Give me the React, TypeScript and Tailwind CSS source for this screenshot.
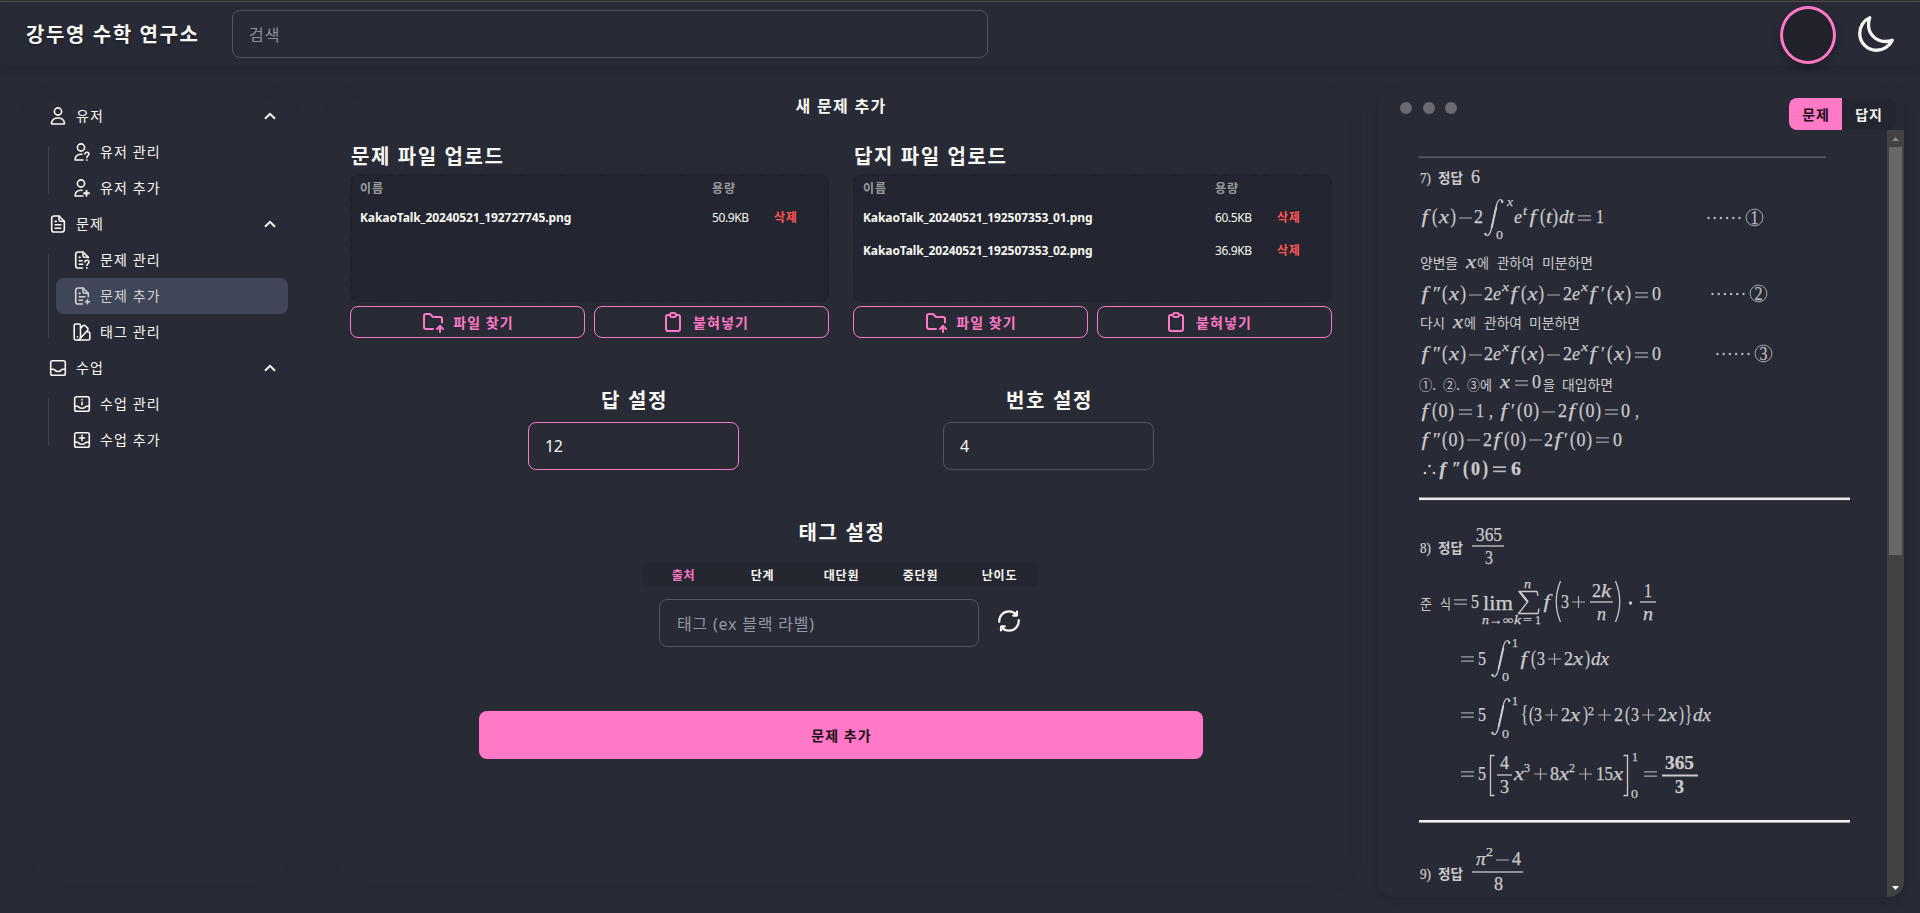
import type { ReactNode } from "react";
import { IoMoonOutline } from "react-icons/io5";
import { TbClipboard, TbFolderUp } from "react-icons/tb";

/* ---------- icons ---------- */

function Icon({ children }: { children: ReactNode }) {
  return (
    <svg
      viewBox="0 0 20 20"
      className="h-5 w-5 shrink-0"
      fill="none"
      stroke="currentColor"
      strokeWidth="1.6"
      strokeLinecap="round"
      strokeLinejoin="round"
    >
      {children}
    </svg>
  );
}

const Question = (
  <path d="M12.9 11.9c.2-1.1 1-1.6 2-1.6 1.200 0 2 .8 2 1.800 0 1.700-2 1.600-2 3.300M14.900 17.900v.3" strokeWidth="1.600" />
);
const personShape = "M11 18H3.100c-.3-3.500 2-5.700 5.900-5.700h1";

const UserIcon = () => (
  <Icon>
    <circle cx="10" cy="5.500" r="3.600" />
    <path d="M4.400 18c-.7 0-1-.4-.9-1 .5-3 2.700-5 6.500-5s6 2 6.500 5c.1.6-.2 1-.9 1z" />
  </Icon>
);
const UserQuestionIcon = () => (
  <Icon>
    <circle cx="9" cy="5.500" r="3.600" />
    <path d={personShape} />
    {Question}
  </Icon>
);
const UserPlusIcon = () => (
  <Icon>
    <circle cx="9" cy="5.500" r="3.600" />
    <path d={personShape} />
    <path d="M14.500 12.700v5M12 15.200h5" strokeWidth="1.900" />
  </Icon>
);
const sheetCorner = "M11 2v3.500a1.700 1.700 0 0 0 1.700 1.700h3.600";
const FileIcon = () => (
  <Icon>
    <path d="M11 2H6a2.300 2.300 0 0 0-2.300 2.300v11.400A2.300 2.300 0 0 0 6 18h8a2.300 2.300 0 0 0 2.300-2.300V7.200z" />
    <path d={sheetCorner} />
    <path d="M7.200 7.400h1M7.200 10.800h5.600M7.200 14.200h5.600" />
  </Icon>
);
const FileQuestionIcon = () => (
  <Icon>
    <path d="M10.500 18H6a2.300 2.300 0 0 1-2.300-2.300V4.300A2.300 2.300 0 0 1 6 2h5l5.300 5.200v.6" />
    <path d={sheetCorner} />
    <path d="M7.200 7.400h.8M7.200 10.800h3M7.200 14.200h3.500" />
    {Question}
  </Icon>
);
const FilePlusIcon = () => (
  <Icon>
    <path d="M10.500 18H6a2.300 2.300 0 0 1-2.300-2.300V4.300A2.300 2.300 0 0 1 6 2h5l5.300 5.200v3.500" />
    <path d={sheetCorner} />
    <path d="M7.200 7.400h.8M7.200 10.800h5.600M7.200 14.200h3.200M15.500 13.800v4M13.500 15.800h4" />
  </Icon>
);
const SwatchIcon = () => (
  <Icon>
    <rect x="2.200" y="2" width="6.300" height="16" rx="1.600" />
    <path d="M8.500 6.200l2.700-2.500c.7-.6 1.500-.6 2.100 0l2.300 2.400c.6.7.6 1.500 0 2.100L7 17.700M14.300 9.800h1.800a1.700 1.700 0 0 1 1.700 1.700v4.800a1.700 1.700 0 0 1-1.700 1.700H6M5.400 14.800v.2" />
  </Icon>
);
const InboxIcon = () => (
  <Icon>
    <rect x="2.700" y="2.700" width="14.600" height="14.600" rx="1.800" />
    <path d="M2.900 11.200h2.600c1 0 1.500 2.300 4.500 2.300s3.500-2.300 4.500-2.300h2.600" />
  </Icon>
);
const InboxInfoIcon = () => (
  <Icon>
    <rect x="2.700" y="2.700" width="14.600" height="14.600" rx="1.800" />
    <path d="M2.900 12.200h2.600c1 0 1.500 2 4.500 2s3.500-2 4.500-2h2.600M10 5.600v.3M10 8.200v2.600" />
  </Icon>
);
const InboxPlusIcon = () => (
  <Icon>
    <rect x="2.700" y="2.700" width="14.600" height="14.600" rx="1.800" />
    <path d="M2.900 12.200h2.600c1 0 1.500 2 4.500 2s3.500-2 4.500-2h2.600M10 5.400v5.200M7.400 8h5.200" />
  </Icon>
);

const RefreshIcon = () => (
  <svg viewBox="0 0 24 24" className="mb-[5px] h-6 w-6" fill="none" stroke="currentColor" strokeWidth="2.200" strokeLinecap="round" strokeLinejoin="round">
    <path d="M2.300 12.800C2 6.500 6.500 2.300 12 2.300c3 0 5.500 1.200 7.300 3.200M20 2.600v3.400c0 .4-.2.600-.6.600h-3.200" />
    <path d="M21.700 11.200c.3 6.300-4.200 10.500-9.700 10.500-3 0-5.500-1.200-7.300-3.200M4 21.400v-3.400c0-.4.2-.6.6-.6h3.200" />
  </svg>
);

/* ---------- sidebar ---------- */

type Item = { label: string; icon: ReactNode; active?: boolean };
const groups: { label: string; icon: ReactNode; items: Item[] }[] = [
  {
    label: "유저",
    icon: <UserIcon />,
    items: [
      { label: "유저 관리", icon: <UserQuestionIcon /> },
      { label: "유저 추가", icon: <UserPlusIcon /> },
    ],
  },
  {
    label: "문제",
    icon: <FileIcon />,
    items: [
      { label: "문제 관리", icon: <FileQuestionIcon /> },
      { label: "문제 추가", icon: <FilePlusIcon />, active: true },
      { label: "태그 관리", icon: <SwatchIcon /> },
    ],
  },
  {
    label: "수업",
    icon: <InboxIcon />,
    items: [
      { label: "수업 관리", icon: <InboxInfoIcon /> },
      { label: "수업 추가", icon: <InboxPlusIcon /> },
    ],
  },
];

function Sidebar() {
  return (
    <aside className="h-[815px] w-[288px] shrink-0 rounded-[44px] p-4 text-[14px] tracking-[1.1px] shadow-[inset_0_0_20px_rgba(0,0,0,0.055)]">
      {groups.map((g) => (
        <div key={g.label}>
          <div className="flex h-9 items-center gap-2 pr-3 pl-4">
            {g.icon}
            <span className="mb-px grow">{g.label}</span>
            <svg viewBox="0 0 12 8" className="h-2 w-3" fill="none" stroke="currentColor" strokeWidth="2">
              <path d="M1 6.800l5-5 5 5" />
            </svg>
          </div>
          <div className="ml-4 flex">
            <div className="my-3 w-px bg-[#3d3f4a]" />
            <ul className="grow pl-[7px]">
              {g.items.map((i) => (
                <li
                  key={i.label}
                  className={
                    i.active
                      ? "flex h-9 items-center gap-2 rounded-lg bg-[#414558] px-4 text-[#d3d3d3]"
                      : "flex h-9 items-center gap-2 px-4"
                  }
                >
                  {i.icon}
                  <span className="mb-px">{i.label}</span>
                </li>
              ))}
            </ul>
          </div>
        </div>
      ))}
    </aside>
  );
}

/* ---------- main form ---------- */

type UploadFile = { name: string; size: string };

function OutlineButton({ icon, label, inset }: { icon: ReactNode; label: string; inset?: boolean }) {
  return (
    <button
      className={
        inset
          ? "flex h-8 w-[235px] items-center justify-center gap-2 rounded-lg border border-[#ff79c6] pr-[13px] text-[14px] font-bold tracking-[1.1px] text-[#ff79c6]"
          : "flex h-8 w-[235px] items-center justify-center gap-2 rounded-lg border border-[#ff79c6] text-[14px] font-bold tracking-[1.1px] text-[#ff79c6]"
      }
    >
      {icon}
      <span>{label}</span>
    </button>
  );
}

function Upload({ title, files }: { title: string; files: UploadFile[] }) {
  return (
    <section className="w-[479px]">
      <h2 className="h-[37px] pt-[6px] pl-px text-[20px] leading-7 font-bold tracking-[1.6px]">{title}</h2>
      <div className="h-32 rounded-lg border-2 border-dashed border-[#20222c] bg-[#232530] px-2 text-[12px]">
        <div className="flex h-[25px] items-center pt-px font-bold tracking-[1px] text-[#9a9b9c]">
          <span className="w-[352px]">이름</span>
          <span>용량</span>
        </div>
        {files.map((f) => (
          <div key={f.name} className="flex h-[33px] items-center">
            <span className="w-[352px] font-bold tracking-[-0.1px]">{f.name}</span>
            <span className="w-[62px] tracking-[-0.4px]">{f.size}</span>
            <span className="font-bold tracking-[0.8px] text-[#ff5555]">삭제</span>
          </div>
        ))}
      </div>
      <div className="mt-1 flex justify-between">
        <OutlineButton icon={<TbFolderUp className="h-6 w-6" />} label="파일 찾기" />
        <OutlineButton icon={<TbClipboard className="h-6 w-6" />} label="붙혀넣기" inset />
      </div>
    </section>
  );
}

function Field({ title, value, focused }: { title: string; value: string; focused?: boolean }) {
  return (
    <section className="flex w-[211px] flex-col items-center">
      <h2 className="mb-[7px] pt-px pl-[2px] text-[20px] leading-7 font-bold tracking-[1.6px]">{title}</h2>
      <input
        defaultValue={value}
        className={
          focused
            ? "h-12 w-full rounded-lg border border-[#ff79c6] bg-transparent px-4 pb-px text-[16px] tracking-[-0.3px] outline-none"
            : "h-12 w-full rounded-lg border border-[#52545e] bg-transparent px-4 pb-px text-[16px] tracking-[-0.3px] outline-none"
        }
      />
    </section>
  );
}

const tabs = ["출처", "단계", "대단원", "중단원", "난이도"];

function ProblemForm() {
  return (
    <main className="ml-4 flex h-[815px] w-[1042px] shrink-0 flex-col items-center rounded-[44px] px-[30px] pt-3 shadow-[inset_0_0_20px_rgba(0,0,0,0.055)]">
      <h1 className="text-[16px] leading-6 font-bold tracking-[1.3px]">새 문제 추가</h1>
      <div className="mt-[19px] flex w-full justify-between">
        <Upload title="문제 파일 업로드" files={[{ name: "KakaoTalk_20240521_192727745.png", size: "50.9KB" }]} />
        <Upload
          title="답지 파일 업로드"
          files={[
            { name: "KakaoTalk_20240521_192507353_01.png", size: "60.5KB" },
            { name: "KakaoTalk_20240521_192507353_02.png", size: "36.9KB" },
          ]}
        />
      </div>
      <div className="mt-12 flex w-full gap-[204px] pl-[178px]">
        <Field title="답 설정" value="12" focused />
        <Field title="번호 설정" value="4" />
      </div>
      <h2 className="mt-[49px] pl-[2px] text-[20px] leading-7 font-bold tracking-[1.6px]">태그 설정</h2>
      <div className="mt-4 grid h-6 w-[396px] grid-cols-5 items-center rounded-lg bg-[#242630] pt-px pl-px text-center text-[12px] font-bold tracking-[0.8px]">
        {tabs.map((t, i) => (
          <span key={t} className={i === 0 ? "text-[#ff79c6]" : ""}>
            {t}
          </span>
        ))}
      </div>
      <div className="mt-3 flex w-[364px] items-center gap-[18px]">
        <input
          placeholder="태그 (ex 블랙 라벨)"
          className="h-12 w-80 shrink-0 rounded-lg border border-[#52545e] bg-transparent pt-[2px] pr-4 pl-[17px] text-[16px] tracking-[0.8px] outline-none placeholder:text-[#9399a4]"
        />
        <RefreshIcon />
      </div>
      <button className="mt-16 h-12 w-[724px] rounded-lg bg-[#ff79c6] pl-px text-[14px] font-bold tracking-[1.1px] text-[#211019]">
        문제 추가
      </button>
    </main>
  );
}

/* ---------- solution sheet ---------- */

type GlyphRun = {
  x: number;
  y: number;
  w: number;
  s?: number;
  it?: boolean;
  bold?: boolean;
  ko?: boolean;
  t: string;
};

/** One run of the sheet, stretched to its typeset width. */
function R({ x, y, w, s = 18, it, bold, ko, t }: GlyphRun) {
  return (
    <text
      x={x}
      y={y}
      fontSize={s}
      textLength={w}
      lengthAdjust="spacingAndGlyphs"
      fontWeight={bold ? 700 : 400}
      fontStyle={it ? "italic" : "normal"}
      stroke="currentColor"
      strokeWidth={ko ? 0 : 0.25}
      className={ko ? "font-['Noto_Sans_CJK_KR',sans-serif]" : "font-['Liberation_Serif',serif]"}
    >
      {t}
    </text>
  );
}

/** Italic function letter; its tail and hook overhang the advance width. */
function F({ x, y, bold }: { x: number; y: number; bold?: boolean }) {
  return <R x={x + 1.500} y={y} w={6.400} s={19} it bold={bold} t="f" />;
}

/** A single symbol between upright parentheses */
function Paren({ x, y, w, t, it, bold }: GlyphRun) {
  const inner = t === "t" ? 6 : it ? 10 : 9;
  return (
    <>
      <R x={x} y={y} w={5.500} s={20} t="(" bold={bold} />
      <R x={x + (w - inner) / 2} y={y} w={inner} s={18} t={t} it={it} bold={bold} />
      <R x={x + w - 5.500} y={y} w={5.500} s={20} t=")" bold={bold} />
    </>
  );
}

function Minus({ x, y, w = 13 }: { x: number; y: number; w?: number }) {
  return <path d={`M${x} ${y}h${w}`} stroke="currentColor" strokeWidth="1.200" opacity="0.7" />;
}
function Equals({ x, y, w = 13 }: { x: number; y: number; w?: number }) {
  return <path d={`M${x} ${y - 2.2}h${w}M${x} ${y + 2.2}h${w}`} stroke="currentColor" strokeWidth="1.200" opacity="0.75" />;
}
function Plus({ x, y }: { x: number; y: number }) {
  return <path d={`M${x} ${y}h13M${x + 6.5} ${y - 6}v12`} stroke="currentColor" strokeWidth="1.200" opacity="0.8" />;
}
function Bar({ x, y, w, h = 1.3 }: { x: number; y: number; w: number; h?: number }) {
  return <rect x={x} y={y - h / 2} width={w} height={h} fill="currentColor" />;
}
function Integral({ x, y }: { x: number; y: number }) {
  return (
    <g transform={`translate(${x} ${y})`} fill="none" stroke="currentColor" strokeLinecap="round">
      <path d="M18.500 2.200C16.500-.5 13.800.5 12.500 6L7.200 30.500C6 36 3.500 38 1.200 35.300" strokeWidth="1.200" />
      <path d="M12.200 8.500L7.700 28.500" strokeWidth="2" />
      <path d="M18.200 2.600v.1M1.500 35v.1" strokeWidth="2.400" />
    </g>
  );
}
function Reference({ x, y, n }: { x: number; y: number; n: string }) {
  return (
    <g opacity="0.9">
      {[0, 1, 2, 3, 4, 5].map((i) => (
        <circle key={i} cx={x + 1.500 + i * 6.200} cy={y + 0.5} r="1.200" fill="currentColor" />
      ))}
      <circle cx={x + 47.500} cy={y} r="8.400" fill="none" stroke="currentColor" strokeWidth="0.900" />
      <R x={x + 43.500} y={y + 6} w={8} s={18} t={n} />
    </g>
  );
}

function SecondDerivative({ y }: { y: number }) {
  return (
    <>
      <F x={1420} y={y} />
      <R x={1433} y={y} w={8} t="″" />
      <Paren x={1442} y={y} w={24} t="x" it />
      <Minus x={1469} y={y - 5} />
      <R x={1484} y={y} w={9} t="2" />
      <R x={1493} y={y} w={8} it t="e" />
      <R x={1502} y={y - 9} w={7} s={13} it t="x" />
      <F x={1509} y={y} />
      <Paren x={1521} y={y} w={23} t="x" it />
      <Minus x={1547} y={y - 5} />
      <R x={1563} y={y} w={9} t="2" />
      <R x={1572} y={y} w={8} it t="e" />
      <R x={1581} y={y - 9} w={7} s={13} it t="x" />
      <F x={1588} y={y} />
      <R x={1601} y={y} w={4} t="′" />
      <Paren x={1607} y={y} w={24} t="x" it />
      <Equals x={1635} y={y - 5} />
      <R x={1652} y={y} w={9} t="0" />
    </>
  );
}

function AnswerLabel({ n, y }: { n: string; y: number }) {
  return (
    <>
      <R x={1420} y={y} w={11} s={14} t={n} />
      <R x={1438} y={y} w={25} s={14} ko bold t="정답" />
    </>
  );
}

function SolutionSheet() {
  return (
    <svg viewBox="1378 130 509 767" className="h-[767px] w-[509px] shrink-0 text-[#cacacd]" fill="currentColor">
      <rect x="1419" y="156.500" width="407" height="1.500" fill="#5e606a" />

      <AnswerLabel n="7)" y={182.5} />
      <R x={1471} y={182.5} w={9} t="6" />

      <F x={1420} y={223} />
      <Paren x={1432} y={223} w={24} t="x" it />
      <Minus x={1459} y={218} />
      <R x={1474} y={223} w={9} t="2" />
      <Integral x={1484} y={199} />
      <R x={1507} y={206} w={6} s={13} it t="x" />
      <R x={1496} y={239} w={7} s={13} t="0" />
      <R x={1514} y={223} w={8} it t="e" />
      <R x={1523} y={215} w={4} s={13} it t="t" />
      <F x={1528} y={223} />
      <Paren x={1540} y={223} w={18} t="t" it />
      <R x={1559} y={223} w={15} it t="dt" />
      <Equals x={1578} y={218} />
      <R x={1596} y={223} w={8} t="1" />
      <Reference x={1707} y={217.500} n="1" />

      <R x={1420} y={268} w={38} s={14} ko t="양변을" />
      <R x={1466} y={268} w={10} it t="x" />
      <R x={1477} y={268} w={12} s={14} ko t="에" />
      <R x={1497} y={268} w={37} s={14} ko t="관하여" />
      <R x={1542} y={268} w={51} s={14} ko t="미분하면" />

      <SecondDerivative y={300} />
      <Reference x={1711} y={293.500} n="2" />

      <R x={1420} y={328} w={25} s={14} ko t="다시" />
      <R x={1453} y={328} w={10} it t="x" />
      <R x={1464} y={328} w={12} s={14} ko t="에" />
      <R x={1484} y={328} w={38} s={14} ko t="관하여" />
      <R x={1529} y={328} w={51} s={14} ko t="미분하면" />

      <SecondDerivative y={360} />
      <Reference x={1716} y={353.500} n="3" />

      <R x={1419} y={389.500} w={17} s={14} ko t="①." />
      <R x={1443} y={389.500} w={17} s={14} ko t="②." />
      <R x={1467} y={389.500} w={25} s={14} ko t="③에" />
      <R x={1500} y={388} w={10} it t="x" />
      <Equals x={1515} y={383} />
      <R x={1532} y={388} w={9} t="0" />
      <R x={1543} y={389.500} w={12} s={14} ko t="을" />
      <R x={1562} y={389.500} w={51} s={14} ko t="대입하면" />

      <F x={1420} y={417} />
      <Paren x={1432} y={417} w={22} t="0" />
      <Equals x={1459} y={412} />
      <R x={1476} y={417} w={8} t="1" />
      <R x={1489} y={417} w={4} t="," />
      <F x={1499} y={417} />
      <R x={1511} y={417} w={4} t="′" />
      <Paren x={1517} y={417} w={22} t="0" />
      <Minus x={1542} y={412} />
      <R x={1558} y={417} w={9} t="2" />
      <F x={1567} y={417} />
      <Paren x={1579} y={417} w={22} t="0" />
      <Equals x={1605} y={412} />
      <R x={1621} y={417} w={9} t="0" />
      <R x={1635} y={417} w={4} t="," />

      <F x={1420} y={446} />
      <R x={1433} y={446} w={8} t="″" />
      <Paren x={1442} y={446} w={22} t="0" />
      <Minus x={1467} y={440} />
      <R x={1483} y={446} w={9} t="2" />
      <F x={1492} y={446} />
      <Paren x={1504} y={446} w={22} t="0" />
      <Minus x={1529} y={440} />
      <R x={1544} y={446} w={9} t="2" />
      <F x={1553} y={446} />
      <R x={1564} y={446} w={4} t="′" />
      <Paren x={1570} y={446} w={22} t="0" />
      <Equals x={1596} y={440} />
      <R x={1613} y={446} w={9} t="0" />

      <g fill="currentColor">
        <circle cx="1425" cy="473" r="1.300" />
        <circle cx="1429.500" cy="466" r="1.300" />
        <circle cx="1434" cy="473" r="1.300" />
      </g>
      <F x={1438} y={475} bold />
      <R x={1452} y={475} w={9} bold t="″" />
      <Paren x={1463} y={475} w={25} t="0" bold />
      <Equals x={1493} y={469} />
      <Equals x={1493} y={469.500} />
      <R x={1511} y={475} w={10} bold t="6" />

      <rect x="1419" y="497.500" width="431" height="2.600" fill="#e9e9ea" />

      <AnswerLabel n="8)" y={553} />
      <R x={1476} y={541} w={26} t="365" />
      <Bar x={1472} y={546} w={32} />
      <R x={1485} y={564} w={8} t="3" />

      <R x={1420} y={609} w={12} s={14} ko t="준" />
      <R x={1440} y={609} w={11} s={14} ko t="식" />
      <Equals x={1454} y={602} />
      <R x={1471} y={608} w={8} t="5" />
      <R x={1483} y={610} w={30} s={21} t="lim" />
      <R x={1482} y={624} w={31} s={12} it t="n→∞" />
      <path d="M1538 596l-1-4.500h-18l8.500 10.500-9 11.500h19.500l1-5" fill="none" stroke="currentColor" strokeWidth="1.300" />
      <path d="M1520 592l8 10" stroke="currentColor" strokeWidth="2.200" />
      <R x={1524} y={588} w={7} s={13} it t="n" />
      <R x={1514} y={624} w={7} s={12} it t="k" />
      <R x={1523} y={624} w={9} s={12} t="=" />
      <R x={1535} y={624} w={6} s={13} t="1" />
      <F x={1542} y={608} />
      <path d="M1560.500 581q-8.500 20.500 0 41M1615.500 581q8.500 20.500 0 41" fill="none" stroke="currentColor" strokeWidth="1.300" />
      <R x={1561} y={608} w={8} t="3" />
      <Plus x={1572} y={602} />
      <R x={1592} y={597} w={9} t="2" />
      <R x={1601} y={597} w={10} it t="k" />
      <Bar x={1590} y={602} w={23} />
      <R x={1597} y={620} w={9} it t="n" />
      <circle cx="1630.500" cy="603" r="1.700" />
      <R x={1644} y={597} w={8} t="1" />
      <Bar x={1640} y={602} w={16} />
      <R x={1643} y={620} w={10} it t="n" />

      <Equals x={1461} y={659} />
      <R x={1478} y={665} w={8} t="5" />
      <Integral x={1491} y={640} />
      <R x={1512} y={647} w={6} s={13} t="1" />
      <R x={1502} y={681} w={7} s={13} t="0" />
      <F x={1519} y={665} />
      <R x={1531} y={665} w={5} s={20} t="(" />
      <R x={1537} y={665} w={8} t="3" />
      <Plus x={1548} y={659} />
      <R x={1564} y={665} w={9} t="2" />
      <R x={1573} y={665} w={10} it t="x" />
      <R x={1585} y={665} w={5} s={20} t=")" />
      <R x={1591} y={665} w={18} it t="dx" />

      <Equals x={1461} y={715} />
      <R x={1478} y={721} w={8} t="5" />
      <Integral x={1491} y={698} />
      <R x={1512} y={705} w={6} s={13} t="1" />
      <R x={1502} y={738} w={7} s={13} t="0" />
      <R x={1521} y={721} w={7} s={23} t="{" />
      <R x={1529} y={721} w={5} s={20} t="(" />
      <R x={1534} y={721} w={8} t="3" />
      <Plus x={1545} y={715} />
      <R x={1561} y={721} w={9} t="2" />
      <R x={1570} y={721} w={10} it t="x" />
      <R x={1583} y={721} w={5} s={20} t=")" />
      <R x={1588} y={715} w={6} s={13} t="2" />
      <Plus x={1598} y={715} />
      <R x={1614} y={721} w={9} t="2" />
      <R x={1625} y={721} w={5} s={20} t="(" />
      <R x={1631} y={721} w={8} t="3" />
      <Plus x={1642} y={715} />
      <R x={1658} y={721} w={9} t="2" />
      <R x={1667} y={721} w={10} it t="x" />
      <R x={1679} y={721} w={5} s={20} t=")" />
      <R x={1685} y={721} w={7} s={23} t="}" />
      <R x={1693} y={721} w={18} it t="dx" />

      <Equals x={1461} y={774} />
      <R x={1478} y={780} w={8} t="5" />
      <path d="M1494.500 755.500h-4v40h4M1623.500 755.500h4v40h-4" fill="none" stroke="currentColor" strokeWidth="1.300" />
      <R x={1500} y={769} w={9} t="4" />
      <Bar x={1497} y={775} w={15} />
      <R x={1500} y={793} w={9} t="3" />
      <R x={1514} y={780} w={10} it t="x" />
      <R x={1524} y={772} w={6} s={13} t="3" />
      <Plus x={1534} y={774} />
      <R x={1550} y={780} w={9} t="8" />
      <R x={1559} y={780} w={10} it t="x" />
      <R x={1569} y={772} w={6} s={13} t="2" />
      <Plus x={1579} y={774} />
      <R x={1596} y={780} w={17} t="15" />
      <R x={1613} y={780} w={10} it t="x" />
      <R x={1632} y={761} w={6} s={13} t="1" />
      <R x={1631} y={798} w={7} s={13} t="0" />
      <Equals x={1644} y={774} />
      <R x={1665} y={769} w={29} bold t="365" />
      <Bar x={1662} y={775.500} w={36} h={2} />
      <R x={1675} y={793} w={9} bold t="3" />

      <rect x="1419" y="820" width="431" height="2.600" fill="#f0f0f1" />

      <AnswerLabel n="9)" y={879} />
      <R x={1476} y={865} w={10} it t="π" />
      <R x={1486} y={856} w={7} s={13} t="2" />
      <Minus x={1496} y={860} />
      <R x={1512} y={865} w={9} t="4" />
      <Bar x={1472} y={872} w={51} />
      <R x={1494} y={890} w={9} t="8" />
    </svg>
  );
}

function Preview() {
  return (
    <section className="mt-[6px] ml-4 flex h-[809px] w-[526px] shrink-0 flex-col overflow-hidden rounded-2xl shadow-[0_4px_12px_rgba(0,0,0,0.14)]">
      <div className="flex h-[42px] shrink-0 justify-between pr-2 pl-[22px]">
        <div className="flex gap-[10.5px] pt-[14px]">
          <i className="h-3 w-3 rounded-full bg-[#696a72]" />
          <i className="h-3 w-3 rounded-full bg-[#696a72]" />
          <i className="h-3 w-3 rounded-full bg-[#696a72]" />
        </div>
        <div className="mt-[10px] flex h-8 overflow-hidden rounded-lg text-[14px] font-bold tracking-[0.8px]">
          <button className="w-[53px] bg-[#ff79c6] pl-px text-[#211019]">문제</button>
          <button className="w-[54px] bg-[#232530]">답지</button>
        </div>
      </div>
      <div className="flex h-[767px]">
        <SolutionSheet />
        <div className="flex w-[17px] flex-col items-center justify-between bg-[#424242]">
          <div className="flex flex-col items-center">
            <svg viewBox="0 0 17 17" className="h-[17px] w-[17px]">
              <path d="M5 11l3.500-4 3.500 4z" fill="#8b8b8b" />
            </svg>
            <div className="h-[408px] w-[13px] bg-[#686868]" />
          </div>
          <svg viewBox="0 0 17 17" className="h-[17px] w-[17px]">
            <path d="M5 6l3.500 4 3.500-4z" fill="#ffffff" />
          </svg>
        </div>
      </div>
    </section>
  );
}

/* ---------- page ---------- */

export default function App() {
  return (
    <div className="flex h-[913px] w-[1920px] flex-col overflow-hidden bg-[#282a36] font-['Noto_Sans','Noto_Sans_CJK_KR',sans-serif] text-[#f8f8f2]">
      <div className="h-[2px] shrink-0 border-b border-[#504d4d] bg-[#33312f]" />
      <header className="flex h-16 shrink-0 items-center pr-6 pl-[26px] shadow-[0_3px_8px_rgba(0,0,0,0.13)]">
        <div className="w-[206px] pt-px text-[20px] font-bold tracking-[1.6px] [text-shadow:0_2px_3px_rgba(0,0,0,0.3)]">
          강두영 수학 연구소
        </div>
        <input
          placeholder="검색"
          className="h-12 w-[756px] rounded-lg border border-[#52545e] bg-transparent px-4 pt-[2px] text-[16px] tracking-[1px] outline-none placeholder:text-[#8e9099]"
        />
        <div className="grow" />
        <div className="mt-[2px] h-[58px] w-14 rounded-[50%] border-[3px] border-[#ff79c6] bg-[#21222c] shadow-[0_4px_8px_rgba(0,0,0,0.3)]" />
        <IoMoonOutline className="ml-[20px] h-10 w-10 [&_path]:[stroke-width:42]" />
      </header>
      <div className="flex grow pt-4 pl-4">
        <Sidebar />
        <ProblemForm />
        <Preview />
      </div>
    </div>
  );
}
